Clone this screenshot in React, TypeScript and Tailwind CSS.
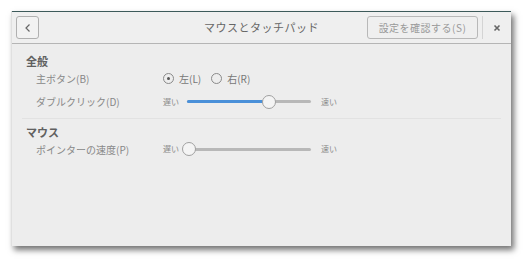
import React from 'react';

const font = { fontFamily: '"Noto Sans CJK JP", "Noto Sans", sans-serif' };

const Slider: React.FC<{ value: number }> = ({ value }) => {
  return (
    <div className="flex items-center gap-[8px]">
      <span className="text-[8px] text-[#8a8a8a]">遅い</span>
      <div className="relative w-[124px] h-[14px] flex items-center">
        <div className="w-full h-[3px] rounded-full bg-[#b8b8b8]" />
        <div className="absolute left-0 h-[3px] rounded-full bg-[#4a90d9]" style={{ width: `${value}%` }} />
        <div
          className="absolute w-[14px] h-[14px] rounded-full bg-[#f4f4f4] border border-[#a0a0a0]"
          style={{ left: `calc(${value}% - 7px)` }}
        />
      </div>
      <span className="text-[8px] text-[#8a8a8a] ml-[2px]">速い</span>
    </div>
  );
};

const Radio: React.FC<{ checked?: boolean; label: string }> = ({ checked, label }) => (
  <div className="flex items-center gap-[5px]">
    <div className="w-[11px] h-[11px] rounded-full border border-[#8a8a8a] flex items-center justify-center">
      {checked && <div className="w-[3px] h-[3px] rounded-full bg-[#555]" />}
    </div>
    <span className="text-[10px] text-[#777]">{label}</span>
  </div>
);

export default function App() {
  return (
    <div className="w-[530px] h-[265px] bg-white pt-[11px] pl-[11px]" style={font}>
      <div className="w-[500px] h-[235px] bg-[#ededed] flex flex-col shadow-[3px_4px_6px_rgba(0,0,0,0.55)] border-l border-[#e0e0e0]">
        {/* header */}
        <div className="h-[33px] flex items-center border-t border-[#3d5a5a] border-b border-b-[#b5b5b5] bg-[#efefef] pl-[4px]">
          <button className="w-[23px] h-[23px] rounded-[3px] border border-[#b0b0b0] bg-[#f2f2f2] flex items-center justify-center">
            <svg width="8" height="10" viewBox="0 0 8 10">
              <path d="M5.5 1.5 L2 5 L5.5 8.5" fill="none" stroke="#666" strokeWidth="1.2" />
            </svg>
          </button>
          <div className="flex-1 text-center text-[11px] tracking-[0.5px] text-[#666] pl-[117px]">マウスとタッチパッド</div>
          <button className="w-[111px] h-[23px] rounded-[3px] border border-[#b8b8b8] bg-[#efefef] text-[10px] tracking-[0.5px] text-[#999]">
            設定を確認する(S)
          </button>
          <div className="w-px h-[23px] bg-[#d4d4d4] ml-[4px]" />
          <div className="w-[28px] flex items-center justify-center">
            <svg width="8" height="8" viewBox="0 0 8 8">
              <path d="M1.5 1.5 L6.5 6.5 M6.5 1.5 L1.5 6.5" stroke="#666" strokeWidth="1.6" />
            </svg>
          </div>
        </div>

        {/* content */}
        <div className="flex flex-col px-[10px] pt-[9px]">
          <div className="pl-[4px] text-[11px] font-bold text-[#606060] leading-[16px]">全般</div>
          <div className="flex items-center h-[19px] pl-[14px]">
            <div className="w-[127px] text-[10px] text-[#888]">主ボタン(B)</div>
            <div className="flex items-center gap-[10px]">
              <Radio checked label="左(L)" />
              <Radio label="右(R)" />
            </div>
          </div>
          <div className="flex items-center h-[27px] pl-[14px]">
            <div className="w-[127px] text-[10px] text-[#888]">ダブルクリック(D)</div>
            <Slider value={66} />
          </div>
          <div className="h-px bg-[#e2e2e2] mt-[3px] mb-[5px]" />
          <div className="pl-[4px] text-[11px] font-bold text-[#606060] leading-[16px]">マウス</div>
          <div className="flex items-center h-[18px] pl-[14px]">
            <div className="w-[127px] text-[10px] text-[#888]">ポインターの速度(P)</div>
            <Slider value={2} />
          </div>
        </div>
      </div>
    </div>
  );
}
